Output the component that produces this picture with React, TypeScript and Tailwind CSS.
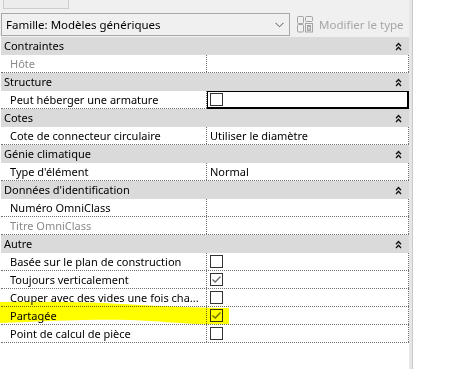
import React from "react";

type Row =
  | { kind: "header"; label: string }
  | { kind: "prop"; label: string; muted?: boolean; value?: string; check?: "on" | "off"; selected?: boolean };

const rows: Row[] = [
  { kind: "header", label: "Contraintes" },
  { kind: "prop", label: "Hôte", muted: true },
  { kind: "header", label: "Structure" },
  { kind: "prop", label: "Peut héberger une armature", check: "off", selected: true },
  { kind: "header", label: "Cotes" },
  { kind: "prop", label: "Cote de connecteur circulaire", value: "Utiliser le diamètre" },
  { kind: "header", label: "Génie climatique" },
  { kind: "prop", label: "Type d'élément", value: "Normal" },
  { kind: "header", label: "Données d'identification" },
  { kind: "prop", label: "Numéro OmniClass" },
  { kind: "prop", label: "Titre OmniClass", muted: true },
  { kind: "header", label: "Autre" },
  { kind: "prop", label: "Basée sur le plan de construction", check: "off" },
  { kind: "prop", label: "Toujours verticalement", check: "on" },
  { kind: "prop", label: "Couper avec des vides une fois cha...", check: "off" },
  { kind: "prop", label: "Partagée", check: "on" },
  { kind: "prop", label: "Point de calcul de pièce", check: "off" },
];

function Collapse() {
  return (
    <svg width="7" height="9" viewBox="0 0 7 9" className="mr-[7px]">
      <path d="M1 4.2 L3.5 1.5 L6 4.2" fill="none" stroke="#111" strokeWidth="1.3" />
      <path d="M1 8 L3.5 5.3 L6 8" fill="none" stroke="#111" strokeWidth="1.3" />
    </svg>
  );
}

function Checkbox({ on }: { on: boolean }) {
  return (
    <div className="w-[13px] h-[13px] border border-[#333333] bg-white flex items-center justify-center">
      {on && (
        <svg width="11" height="11" viewBox="0 0 11 11">
          <path d="M1.5 5.5 L4.2 8 L9.5 2.5" fill="none" stroke="#6b6b6b" strokeWidth="1.3" />
        </svg>
      )}
    </div>
  );
}

function EditIcon() {
  return (
    <svg width="16" height="17" viewBox="0 0 16 17">
      <g fill="none" stroke="#a3a3a3" strokeWidth="1">
        <rect x="0.5" y="0.5" width="6" height="7" rx="1" />
        <rect x="0.5" y="8.5" width="6" height="7.5" rx="1" />
        <rect x="8.5" y="0.5" width="7" height="5" rx="1" />
        <rect x="8.5" y="7.5" width="7" height="8.5" />
        <path d="M10 10.5 H14 M10 13 H14" />
        <rect x="10.5" y="9.5" width="3" height="5" />
      </g>
    </svg>
  );
}

export default function App() {
  return (
    <div
      className="relative w-[453px] h-[369px] flex bg-white overflow-hidden text-[11px] text-black"
      style={{ fontFamily: '"Noto Sans", "Open Sans", sans-serif' }}
    >
      <div className="w-[409px] flex flex-col bg-[#f0f0f0]">
        <div className="h-[13px] pl-[3px]">
          <div className="w-[66px] h-[9px] border border-t-0 border-[#cdcdcd] bg-[#ececec]" />
        </div>
        <div className="h-[23px] flex items-center">
          <div className="ml-[1px] w-[289px] h-[23px] border border-[#a8a8a8] bg-[#f0f0f0] flex items-center justify-between pl-[4px] pr-[5px]">
            <span className="leading-[21px] text-[11.5px]">Famille: Modèles génériques</span>
            <svg width="9" height="6" viewBox="0 0 9 6">
              <path d="M0.5 0.8 L4.5 4.8 L8.5 0.8" fill="none" stroke="#555" strokeWidth="1" />
            </svg>
          </div>
          <div className="ml-[7px] flex items-center gap-[6px] text-[#a6a6a6]">
            <EditIcon />
            <span className="leading-[21px] text-[11.5px]">Modifier le type</span>
          </div>
        </div>
        <div className="h-[1px]" />
        <div className="flex-1 bg-white flex flex-col pl-[1px]">
          {rows.map((r, i) =>
            r.kind === "header" ? (
              <div key={i} className="w-[408px] h-[18px] bg-[#dadada] flex items-center justify-between pl-[3px]">
                <span className="leading-[18px]">{r.label}</span>
                <Collapse />
              </div>
            ) : (
              <div key={i} className="w-[408px] h-[18px] flex border-b border-dotted border-[#707070]">
                <div
                  className={`w-[206px] pl-[9px] border-r border-dotted border-[#707070] leading-[17px] whitespace-nowrap overflow-hidden ${
                    r.muted ? "text-[#8a8a8a]" : ""
                  }`}
                >
                  {r.label}
                </div>
                <div
                  className={`flex-1 flex items-center border-r border-dotted border-[#707070] ${
                    r.selected ? "border border-solid border-black border-r-2 border-b-2 -mb-[1px] pl-[2px]" : "pl-[3px]"
                  }`}
                >
                  {r.check ? <Checkbox on={r.check === "on"} /> : <span className="leading-[17px]">{r.value}</span>}
                </div>
              </div>
            )
          )}
        </div>
      </div>
      <div className="w-[3px] bg-[#e6e6e6]" />
      <div className="w-[1px] bg-[#c9c9c9]" />
      <div className="flex-1 bg-white" />
      <svg
        className="absolute left-0 top-0 pointer-events-none mix-blend-multiply"
        width="453"
        height="369"
        viewBox="0 0 453 369"
      >
        <path
          d="M0 302 C50 301 100 302 140 305 C175 307 205 308 229 308 L229 324 C205 325 180 323 150 321 C110 318 50 321 0 323 Z"
          fill="#ffff00"
        />
      </svg>
    </div>
  );
}
